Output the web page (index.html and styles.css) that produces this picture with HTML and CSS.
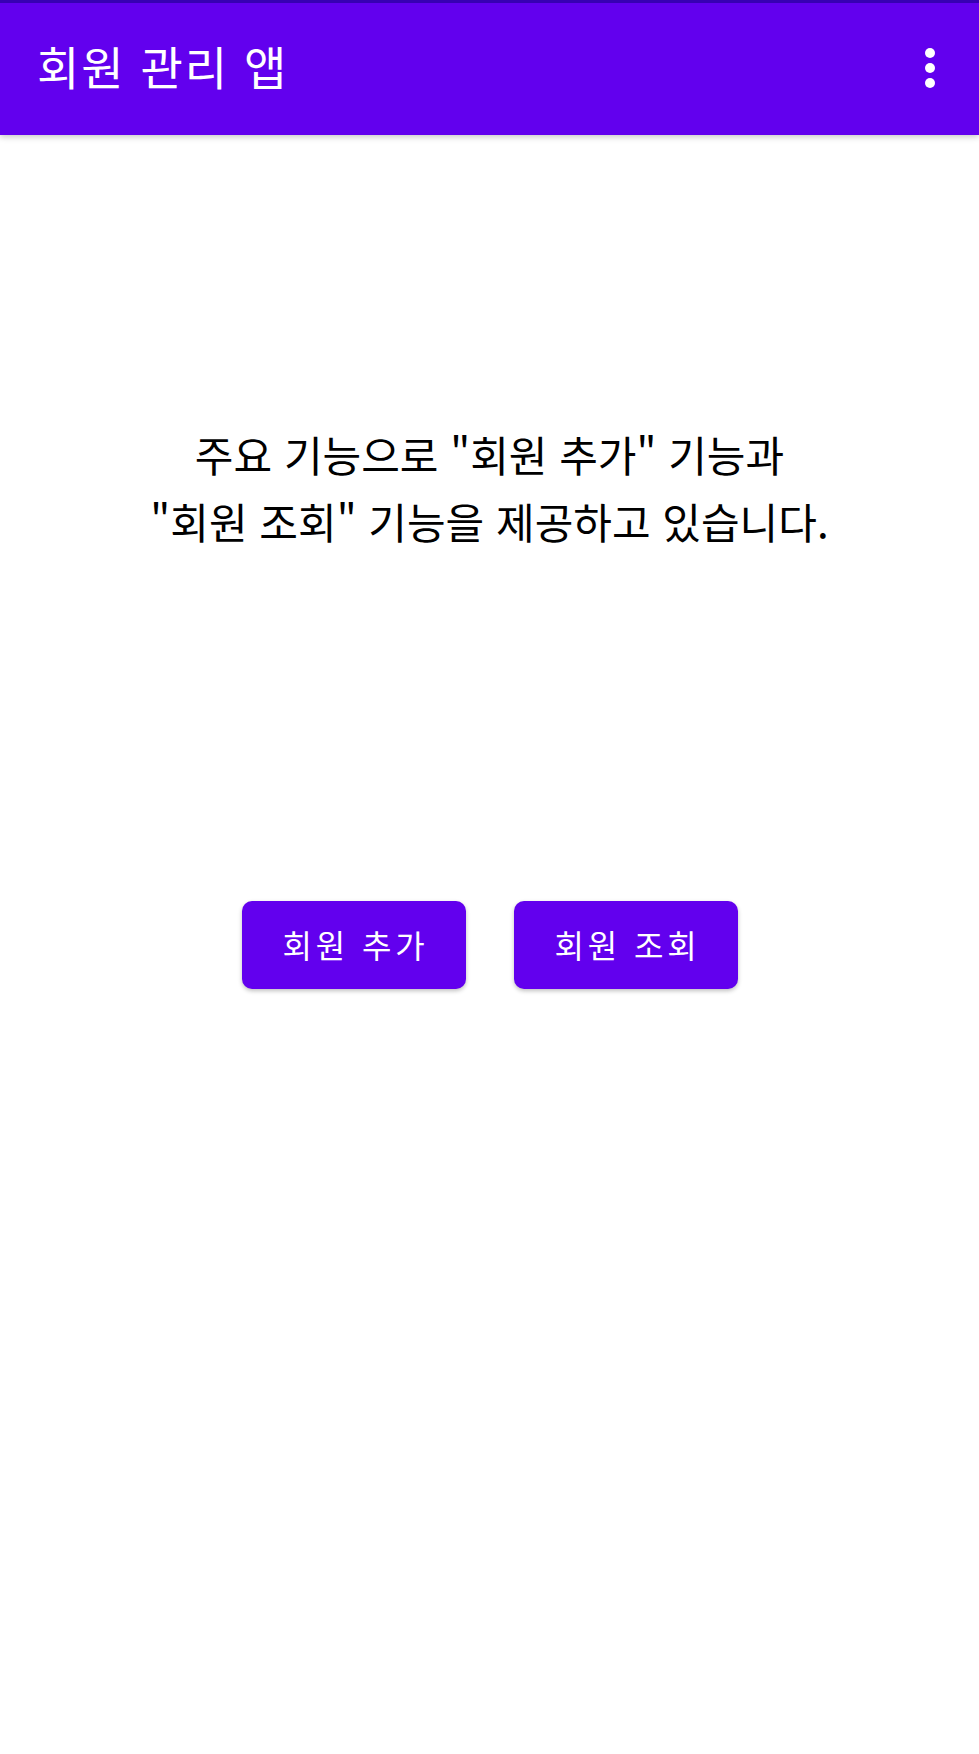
FILE: index.html
```html
<!DOCTYPE html>
<html lang="ko">
<head>
<meta charset="utf-8">
<title>회원 관리 앱</title>
<link rel="stylesheet" href="styles.css">
</head>
<body>
<header class="appbar">
  <h1 class="title">회원 관리 앱</h1>
  <button class="menu" aria-label="더보기">
    <svg width="12" height="42" viewBox="0 0 12 42"><circle cx="6" cy="6" r="5" fill="#fff"/><circle cx="6" cy="21" r="5" fill="#fff"/><circle cx="6" cy="36" r="5" fill="#fff"/></svg>
  </button>
</header>
<main class="content">
  <p class="intro">주요 기능으로 "회원 추가" 기능과<br>"회원 조회" 기능을 제공하고 있습니다.</p>
  <div class="actions">
    <button class="btn">회원 추가</button>
    <button class="btn">회원 조회</button>
  </div>
</main>
</body>
</html>
```
FILE: styles.css
```css
html, body {
  margin: 0;
  padding: 0;
  background: #ffffff;
}
body {
  font-family: "Noto Sans CJK KR", "Noto Sans", sans-serif;
  width: 979px;
  min-height: 1754px;
}
.appbar {
  box-sizing: border-box;
  height: 135px;
  background: #6200ee;
  border-top: 3px solid #3700b3;
  display: flex;
  align-items: center;
  justify-content: space-between;
  padding: 0 43px 2px 37px;
  box-shadow: 0 2px 6px rgba(0, 0, 0, 0.22);
  position: relative;
}
.title {
  margin: 0 0 6px;
  color: #ffffff;
  font-size: 46px;
  font-weight: 400;
  letter-spacing: 2px;
  line-height: 1;
}
.menu {
  background: none;
  border: 0;
  padding: 0;
  display: flex;
  align-items: center;
}
.content {
  display: flex;
  flex-direction: column;
  align-items: center;
}
.intro {
  margin: 285px 0 0;
  font-size: 42px;
  line-height: 67px;
  color: #000000;
  text-align: center;
}
.actions {
  display: flex;
  gap: 48px;
  margin-top: 347px;
}
.btn {
  width: 224px;
  height: 88px;
  border: 0;
  border-radius: 10px;
  background: #6200ee;
  color: #ffffff;
  font-family: "Noto Sans CJK KR", "Noto Sans", sans-serif;
  font-size: 32px;
  letter-spacing: 0.12em;
  box-shadow: 0 2px 4px rgba(0, 0, 0, 0.25);
  padding: 0 0 3px 4px;
}
```
